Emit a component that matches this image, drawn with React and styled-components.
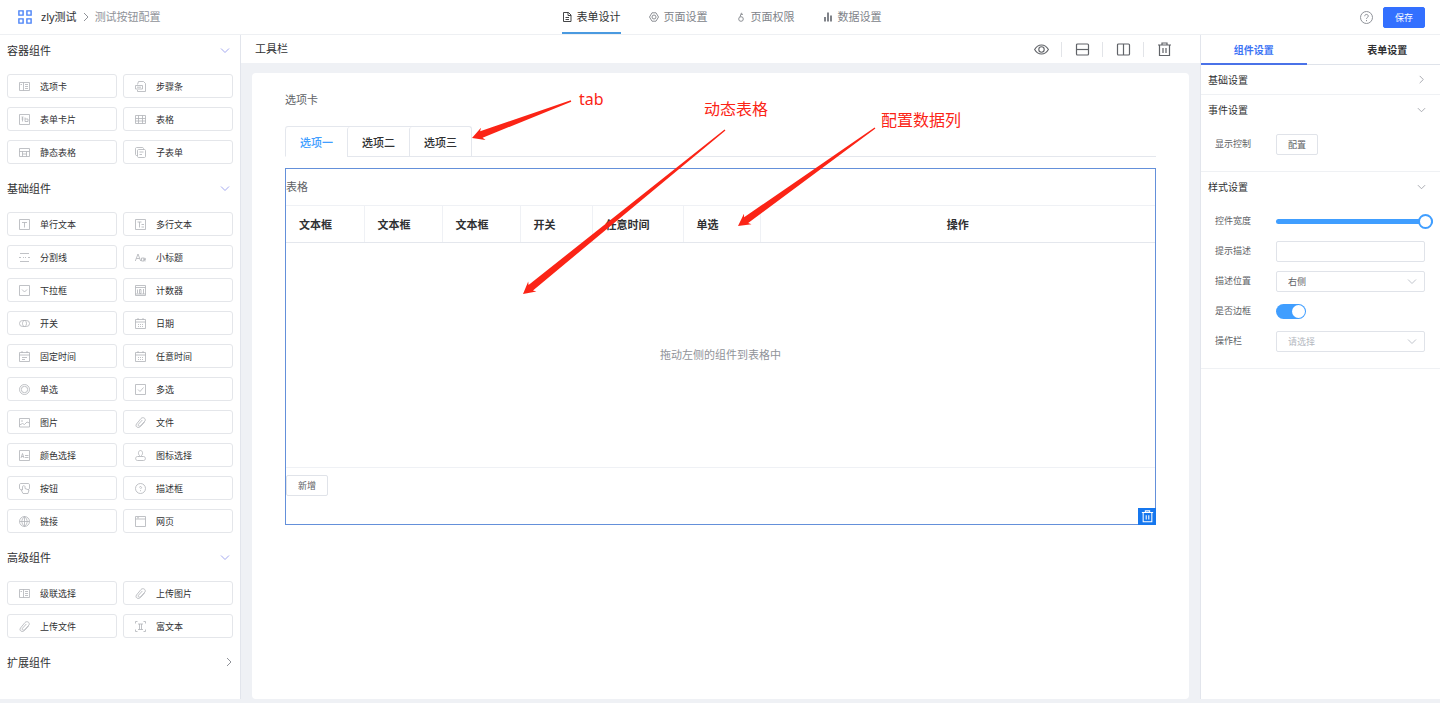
import React, { useState } from "react";
import styled, { createGlobalStyle, css } from "styled-components";

const GlobalStyle = createGlobalStyle`
  * { box-sizing: border-box; }
  body {
    margin: 0;
    background: #eff1f5;
    color: #303133;
    font-family: "Noto Sans", "Noto Sans CJK SC", sans-serif;
    font-size: 11px;
    line-height: 20px;
  }
  button, input, select { font-family: inherit; margin: 0; }
  button { cursor: pointer; }
  h1, h2, h3, p, ul { margin: 0; padding: 0; font-weight: 400; font-size: inherit; }
  svg { display: block; flex: none; }
`;

/* ---------- icons ---------- */

const Stroke = styled.svg`
  fill: none;
  stroke: currentColor;
  stroke-width: ${(p) => p.$weight || 1};
`;

const Chevron = ({ dir = "down", size = 10 }) => (
  <Stroke width={size} height={size} viewBox="0 0 10 10" aria-hidden="true">
    <path d={dir === "down" ? "M1 3.500l4 4 4-4" : "M3 1l4 4-4 4"} />
  </Stroke>
);

const glyphs = {
  tabs: <path d="M.5 1.500h10v8h-10zM4.500 1.500v8M6 3.500h3M6 5.500h3M6 7.500h3M1.500 3.500h1.500" />,
  steps: <path d="M2.500 3.500l1-3h5l2 2v8h-8v-1.500M.5 4.500h7v3.500h-7zM2 6.200h4" />,
  card: <path d="M.5 .5h10v10h-10zM2.500 3h2M2.500 5h2M3.500 3v4.500M6 3.500v4h3v-2.500h-3" />,
  table: <path d="M.5 1.500h10v8h-10zM.5 4.500h10M.5 7h10M3.500 1.500v8M7.500 1.500v8" />,
  staticTable: <path d="M.5 1.500h10v8h-10zM.5 4.500h10M3.500 4.500v5M7.500 4.500v5M3.500 7h4" />,
  subForm: <path d="M2.500 8.500h-1c-1 0-1-1-1-1v-6c0-1 1-1 1-1h6c1 0 1 1 1 1v1M3.500 2.500h6c1 0 1 1 1 1v6c0 1-1 1-1 1h-6c-1 0-1-1-1-1v-6c0-1 1-1 1-1zM4.500 5h4M4.500 7.500h2.500" />,
  text: <path d="M.5 .5h10v10h-10zM3 3.500h5M5.500 3.500v5" />,
  textarea: <path d="M.5 .5h10v10h-10zM2.500 3h4M4.500 3v5.500M6.500 5.500h2.500M6.500 8h2.500" />,
  divider: <path d="M1 1.500h9M0 5.500h2M4 5.500h1M6 5.500h1M9 5.500h2M1 9.500h9" />,
  heading: <path d="M.3 9l2.700-7 2.700 7M1.300 6.500h3.400M6.500 6h2.500v3h-2.500zM9 7.500h1.700c0-2-1.700-2-1.700 0s1 1.700 1.700 1.200" />,
  select: <path d="M.5 .5h10v10h-10zM3 4.500l2.500 2.500 2.500-2.500" />,
  counter: <path d="M.5 .5h10v10h-10zM.5 2.500h10M2.500 4.500v4M4.500 4.500h1.500v4h-1.500zM8.500 4v5M.5 9h10" />,
  toggle: (
    <>
      <rect x=".5" y="2.500" width="10" height="6" rx="3" />
      <path d="M5 2.500c-2 1-2 5 0 6M6 2.500c2 1 2 5 0 6" />
    </>
  ),
  date: <path d="M.5 1.500h10v9h-10zM.5 4h10M3 0v2M8 0v2M3 6.500h1M5 6.500h1M7 6.500h1M3 8.500h1M5 8.500h1M7 8.500h1" />,
  fixedTime: <path d="M.5 1.500h10v9h-10zM.5 4h10M3 0v2M8 0v2M3 6.500h5M3 8.500h3" />,
  radio: (
    <>
      <circle cx="5.500" cy="5.500" r="5" />
      <circle cx="5.500" cy="5.500" r="3.200" />
    </>
  ),
  checkbox: <path d="M.5 .5h10v10h-10zM3 5.500l2 2 3.500-4" />,
  image: <path d="M.5 1.500h10v8.500h-10zM2 4h2M.5 8l3-1.500 2 1 2.500-2.500 2.500 1" />,
  clip: <path d="M9.500 5l-4 4.500c-2.300 2.300-5.900 0-4-2.500l4.500-5.500c2-2 5.300 0 4 2.500l-4.300 4.700c-1.500 1.300-3.200-.2-2.200-1.500l3.800-4.200" />,
  color: <path d="M.5 .5h10v10h-10zM2 8l1.500-4.500 1.500 4.500M2.500 6.500h2M6 5.500h3.500M6 7.500h3.500" />,
  stamp: <path d="M3.500 6.500l1-1c-1.800-1.500-1.200-5 1-5s2.800 3.500 1 5l1 1M2.500 6.500h6c2.500 0 2.500 4 0 4h-6c-2.500 0-2.500-4 0-4z" />,
  button: <path d="M2 6.500c-1.500 0-1.500-1-1.500-1.500v-3c0-1 .5-1.500 1.500-1.500h7c1 0 1.500.5 1.500 1.500v3c0 1-.5 1.500-1.500 1.500M3.500 3.500v3.500l-1.500-.3 2 3.800h5l1-3.500-4-1.500v-2c0-1-2.500-1-2.500 0" />,
  info: (
    <>
      <circle cx="5.500" cy="5.500" r="5" />
      <path d="M4.500 4.500c0-1.500 2.500-1 2 .2l-1 1.300M5.500 7.200v1" />
    </>
  ),
  globe: (
    <>
      <circle cx="5.500" cy="5.500" r="5" />
      <path d="M.5 5.500h10M5.500 .5v10M5.500 .5c-3.500 3-3.500 7 0 10M5.500 .5c3.500 3 3.500 7 0 10" />
    </>
  ),
  page: <path d="M.5 .5h10v10h-10zM.5 3h10M2 1.800h2" />,
  rich: <path d="M.5 2.500v-2h2M8.500 .5h2v2M.5 8.500v2h2M8.500 10.500h2v-2M3 3h5M3 8.500h5M4.500 3v5.500M6.500 3v5.500" />,
};

const Glyph = ({ name }) => (
  <Stroke width="11" height="11" viewBox="0 0 11 11" $weight={0.8} aria-hidden="true">
    {glyphs[name]}
  </Stroke>
);

const Trash = ({ size = 15 }) => (
  <Stroke width={size} height={size} viewBox="0 0 15 15" $weight={1.2} aria-hidden="true">
    <path d="M1 3h13M5 3v-2h5v2M2.500 3v10.500h10v-10.500M6 6v5M9 6v5" />
  </Stroke>
);

/* ---------- page frame ---------- */

const Page = styled.div`
  min-height: 100vh;
  display: flex;
  flex-direction: column;
  padding-bottom: 4px;
`;

const TopBar = styled.header`
  display: grid;
  grid-template-columns: 1fr auto 1fr;
  height: 35px;
  padding: 0 15px 0 18px;
  background: #fff;
  border-bottom: 1px solid #eef0f3;
`;

const Crumbs = styled.nav`
  display: flex;
  align-items: center;
  gap: 4px;
  color: #909399;
`;

const Logo = styled.svg`
  fill: none;
  stroke: #4a82f7;
  stroke-width: 1.4;
`;

const CrumbLink = styled.a`
  margin-left: 5px;
  color: #303133;
  text-decoration: none;
`;

const MainNav = styled.nav`
  display: flex;
  gap: 28px;
`;

const NavLink = styled.a`
  display: flex;
  align-items: center;
  gap: 5px;
  height: 34px;
  padding-top: 2px;
  text-decoration: none;
  color: ${(p) => (p.$active ? "#303133" : "#808389")};
  border-bottom: 2px solid ${(p) => (p.$active ? "#4a9ae0" : "transparent")};
`;

const TopActions = styled.div`
  display: flex;
  align-items: center;
  justify-content: flex-end;
  gap: 10px;
`;

const IconButton = styled.button`
  display: flex;
  align-items: center;
  justify-content: center;
  padding: 0;
  border: 0;
  background: none;
  color: ${(p) => p.$tone || "#606368"};
`;

const Button = styled.button`
  width: 42px;
  height: 21px;
  padding: 0;
  border-radius: 2px;
  font-size: 9px;
  line-height: 19px;
  ${(p) =>
    p.$primary
      ? css`
          color: #fff;
          background: #3370ff;
          border: 1px solid #3370ff;
        `
      : css`
          color: #606266;
          background: #fff;
          border: 1px solid #e0e3e9;
        `}
`;

const Workspace = styled.div`
  flex: 1;
  display: flex;
`;

/* ---------- component palette ---------- */

const Palette = styled.aside`
  flex: none;
  width: 241px;
  background: #fff;
  border-right: 1px solid #e2e5ec;
`;

const GroupTitle = styled.button`
  display: flex;
  align-items: center;
  justify-content: space-between;
  width: 100%;
  height: 30px;
  padding: 0 ${(p) => (p.$open ? 10 : 6)}px 0 7px;
  border: 0;
  background: none;
  color: #303133;
  font-size: 11px;

  svg { color: ${(p) => (p.$open ? "#a3a8f0" : "#909399")}; }
`;

const ItemGrid = styled.div`
  display: grid;
  grid-template-columns: 1fr 1fr;
  gap: 9px 6px;
  padding: 9px 7px;
`;

const Item = styled.button`
  display: flex;
  align-items: center;
  gap: 10px;
  height: 24px;
  padding: 0 11px;
  border: 1px solid #e4e6ea;
  border-radius: 3px;
  background: #fff;
  color: #303133;
  font-size: 9px;

  svg { color: #b0b2b7; }
`;

/* ---------- designer ---------- */

const Designer = styled.main`
  flex: 1;
  min-width: 0;
  display: flex;
  flex-direction: column;
`;

const Toolbar = styled.div`
  display: flex;
  align-items: center;
  justify-content: space-between;
  height: 28px;
  padding: 0 28px 0 14px;
  background: #fff;
`;

const Tools = styled.div`
  display: flex;
  align-items: center;

  button + button {
    margin-left: 12px;
    padding-left: 13px;
    border-left: 1px solid #e2e4e8;
  }
`;

const Canvas = styled.section`
  position: relative;
  flex: 1;
  margin: 10px 11px 0;
  padding: 17px 33px;
  background: #fff;
  border-radius: 4px;
`;

const FieldLabel = styled.h2`
  color: #606266;
`;

const TabStrip = styled.div`
  display: flex;
  height: 31px;
  margin: 16px 0 11px;
  border-bottom: 1px solid #e4e7ed;
`;

const TabGroup = styled.div`
  display: flex;
  height: 31px;
  border: 1px solid #e4e7ed;
  border-width: 1px 1px 0 0;
  border-radius: 3px 3px 0 0;
`;

const Tab = styled.button`
  padding: 0 14px;
  border: 0;
  border-left: 1px solid #e4e7ed;
  border-bottom: 1px solid ${(p) => (p.$active ? "#fff" : "#e4e7ed")};
  border-radius: 3px 0 0 0;
  background: none;
  font-size: 11px;
  font-weight: 500;
  color: ${(p) => (p.$active ? "#409eff" : "#303133")};
`;

const SelectedBlock = styled.div`
  position: relative;
  padding-bottom: 28px;
  border: 1px solid #6490da;
`;

const BlockTitle = styled.h3`
  line-height: 36px;
  color: #606266;
`;

const Grid = styled.table`
  width: 100%;
  margin-bottom: 7px;
  border-collapse: collapse;
  table-layout: fixed;

  th, td { padding: 0; border: 1px solid #eff1f5; }
  th:first-child, td:first-child { border-left: 0; }
  th:last-child, td:last-child { border-right: 0; }
`;

const HeadCell = styled.th`
  width: ${(p) => (p.$width ? `${p.$width}px` : "auto")};
  height: 37px;
  && {
    padding-top: 2px;
    padding-left: ${(p) => (p.$width ? 13 : 0)}px;
    border-bottom-color: #e4e7ed;
  }
  text-align: ${(p) => (p.$width ? "left" : "center")};
  font-weight: 700;
  color: #303133;
`;

const EmptyCell = styled.td`
  height: 225px;
  text-align: center;
  color: #909399;
`;

const DeleteBadge = styled.button`
  position: absolute;
  right: -1px;
  bottom: -1px;
  display: flex;
  align-items: center;
  justify-content: center;
  width: 18px;
  height: 17px;
  padding: 0;
  border: 0;
  color: #fff;
  background: #1677ee;
`;

const Arrows = styled.svg`
  position: absolute;
  left: 0;
  top: 0;
  pointer-events: none;
  fill: #fb2416;
`;

const Note = styled.span`
  position: absolute;
  left: ${(p) => p.$x}px;
  top: ${(p) => p.$y}px;
  font-size: 16px;
  line-height: 20px;
  white-space: nowrap;
  color: #fb2416;
`;

/* ---------- settings ---------- */

const Settings = styled.aside`
  flex: none;
  width: 240px;
  background: #fff;
  border-left: 1px solid #e2e5ec;
`;

const SettingTabs = styled.div`
  display: flex;
  gap: 28px;
  height: 30px;
  box-shadow: inset 0 -1px #dfe3ea;
`;

const SettingTab = styled.button`
  flex: 1;
  padding: 0;
  border: 0;
  border-bottom: 2px solid ${(p) => (p.$active ? "#4a72e8" : "transparent")};
  background: none;
  font-size: 10px;
  font-weight: 700;
  color: ${(p) => (p.$active ? "#3d74f5" : "#303133")};
`;

const SettingGroup = styled.section`
  border-bottom: 1px solid #eff1f4;
`;

const SettingTitle = styled.button`
  display: flex;
  align-items: center;
  justify-content: space-between;
  width: 100%;
  height: 29px;
  padding: 0 14px 0 7px;
  border: 0;
  background: none;
  font-size: 10px;
  color: #303133;

  svg { color: #a0a3a9; }
`;

const Rows = styled.div`
  padding: 5px 15px 12px 14px;
`;

const Row = styled.div`
  display: grid;
  grid-template-columns: 61px 1fr;
  align-items: center;
  height: 30px;
  font-size: 9px;
  color: #606266;
`;

const fieldBox = css`
  width: 100%;
  height: 21px;
  padding: 0 11px;
  border: 1px solid #e0e3e9;
  border-radius: 2px;
  background: #fff;
  font-size: 9px;
  color: #606266;
`;

const TextInput = styled.input`
  ${fieldBox}
`;

const SelectWrap = styled.div`
  display: grid;
  align-items: center;

  select, svg { grid-area: 1 / 1; }
  svg { justify-self: end; margin-right: 8px; color: #c0c4cc; pointer-events: none; }
`;

const Select = styled.select`
  ${fieldBox}
  appearance: none;
  color: ${(p) => (p.$empty ? "#b4b8c0" : "#606266")};
`;

const Slider = styled.input`
  appearance: none;
  width: calc(100% + 8px);
  height: 15px;
  background: transparent;

  &::-webkit-slider-runnable-track {
    height: 5px;
    border-radius: 3px;
    background: #409eff;
  }
  &::-webkit-slider-thumb {
    appearance: none;
    width: 15px;
    height: 15px;
    margin-top: -5px;
    border: 2px solid #409eff;
    border-radius: 50%;
    background: #fff;
  }
`;

const Switch = styled.input`
  appearance: none;
  width: 30px;
  height: 15px;
  padding: 1px;
  border-radius: 8px;
  background: #c0c4cc;

  &::before {
    content: "";
    display: block;
    width: 13px;
    height: 13px;
    border-radius: 50%;
    background: #fff;
  }
  &:checked { background: #409eff; }
  &:checked::before { margin-left: auto; }
`;

/* ---------- data ---------- */

const groups = [
  {
    title: "容器组件",
    items: [
      ["tabs", "选项卡"], ["steps", "步骤条"], ["card", "表单卡片"],
      ["table", "表格"], ["staticTable", "静态表格"], ["subForm", "子表单"],
    ],
  },
  {
    title: "基础组件",
    items: [
      ["text", "单行文本"], ["textarea", "多行文本"], ["divider", "分割线"], ["heading", "小标题"],
      ["select", "下拉框"], ["counter", "计数器"], ["toggle", "开关"], ["date", "日期"],
      ["fixedTime", "固定时间"], ["date", "任意时间"], ["radio", "单选"], ["checkbox", "多选"],
      ["image", "图片"], ["clip", "文件"], ["color", "颜色选择"], ["stamp", "图标选择"],
      ["button", "按钮"], ["info", "描述框"], ["globe", "链接"], ["page", "网页"],
    ],
  },
  {
    title: "高级组件",
    items: [["tabs", "级联选择"], ["clip", "上传图片"], ["clip", "上传文件"], ["rich", "富文本"]],
  },
  { title: "扩展组件" },
];

const columns = [
  ["文本框", 78], ["文本框", 78], ["文本框", 78], ["开关", 72], ["任意时间", 91], ["单选", 77], ["操作"],
];

const navItems = [
  ["表单设计", <path d="M1.500 .5h5l2.500 2.500v6.500h-7.500zM6 .5v3h3M3.500 5.500h3.500M3.500 7.500h3.500" />],
  ["页面设置", <><path d="M3 .8h4l2.500 4.200-2.500 4.200h-4l-2.500-4.200z" /><circle cx="5" cy="5" r="2" /></>],
  ["页面权限", <><circle cx="5" cy="7" r="2.300" /><path d="M4 4.800l1.500-4M5 2.300h2" /></>],
  ["数据设置", <path strokeWidth="2" d="M2 9.500v-4.500M5 9.500v-9M8 9.500v-6" />],
];

/* Tapered arrow: thin at the tail, widening up to a barbed head. */
function arrowPoints([tx, ty], [hx, hy]) {
  const len = Math.hypot(hx - tx, hy - ty);
  const ux = (hx - tx) / len;
  const uy = (hy - ty) / len;
  const at = (back, side) => `${hx - ux * back - uy * side},${hy - uy * back + ux * side}`;
  return [
    at(len, 0.7), at(10, 3.5), at(12, 6.5), at(0, 0), at(12, -6.5), at(10, -3.5), at(len, -0.7),
  ].join(" ");
}

const arrows = [
  [[319, 28], [220, 65]],
  [[473, 57], [271, 221]],
  [[623, 55], [486, 153]],
];

const notes = [["tab", 327, 16], ["动态表格", 452, 26], ["配置数据列", 629, 37]];

/* ---------- views ---------- */

function PaletteGroup({ title, items }) {
  const [open, setOpen] = useState(Boolean(items));
  return (
    <section>
      <GroupTitle $open={open} aria-expanded={open} onClick={() => setOpen(!open)}>
        {title}
        <Chevron dir={open ? "down" : "right"} />
      </GroupTitle>
      {open && items && (
        <ItemGrid>
          {items.map(([icon, label]) => (
            <Item key={label}>
              <Glyph name={icon} />
              {label}
            </Item>
          ))}
        </ItemGrid>
      )}
    </section>
  );
}

function SettingSection({ title, children }) {
  const [open, setOpen] = useState(Boolean(children));
  return (
    <SettingGroup>
      <SettingTitle aria-expanded={open} onClick={() => setOpen(!open)}>
        {title}
        <Chevron dir={open ? "down" : "right"} size={9} />
      </SettingTitle>
      {open && children && <Rows>{children}</Rows>}
    </SettingGroup>
  );
}

export default function App() {
  const [tab, setTab] = useState("选项一");
  const [bordered, setBordered] = useState(true);
  const [width, setWidth] = useState(100);

  return (
    <Page>
      <GlobalStyle />
      <TopBar>
        <Crumbs>
          <Logo width="14" height="14" viewBox="0 0 14 14" aria-hidden="true">
            <path d="M.9 .9h4.200v4.200h-4.200zM8.900 .9h4.200v4.200h-4.200zM.9 8.900h4.200v4.200h-4.200zM8.900 8.900h4.200v4.200h-4.200z" />
          </Logo>
          <CrumbLink href="#">zly测试</CrumbLink>
          <Chevron dir="right" />
          <span>测试按钮配置</span>
        </Crumbs>
        <MainNav>
          {navItems.map(([label, icon], i) => (
            <NavLink key={label} href="#" $active={i === 0}>
              <Stroke width="10" height="10" viewBox="0 0 10 10" $weight={0.9} aria-hidden="true">{icon}</Stroke>
              {label}
            </NavLink>
          ))}
        </MainNav>
        <TopActions>
          <IconButton aria-label="帮助" $tone="#909399">
            <Stroke width="13" height="13" viewBox="0 0 13 13" aria-hidden="true">
              <circle cx="6.500" cy="6.500" r="6" />
              <path d="M4.700 5.200c0-2.500 3.700-2.200 3.600 0c0 1.200-1.800 1.200-1.800 2.600M6.500 9v1.200" />
            </Stroke>
          </IconButton>
          <Button $primary>保存</Button>
        </TopActions>
      </TopBar>

      <Workspace>
        <Palette>
          {groups.map((g) => (
            <PaletteGroup key={g.title} {...g} />
          ))}
        </Palette>

        <Designer>
          <Toolbar>
            <h1>工具栏</h1>
            <Tools>
              <IconButton aria-label="预览">
                <Stroke width="15" height="15" viewBox="0 0 15 15" $weight={1.1} aria-hidden="true">
                  <path d="M.6 7.500c3.400-6 10.400-6 13.800 0c-3.400 6-10.400 6-13.800 0z" />
                  <circle cx="7.500" cy="7.500" r="2.700" />
                </Stroke>
              </IconButton>
              <IconButton aria-label="上下布局">
                <Stroke width="15" height="15" viewBox="0 0 15 15" $weight={1.2} aria-hidden="true">
                  <rect x="1.500" y="2" width="12" height="11" rx="1" />
                  <path d="M1.500 7.500h12" />
                </Stroke>
              </IconButton>
              <IconButton aria-label="左右布局">
                <Stroke width="15" height="15" viewBox="0 0 15 15" $weight={1.2} aria-hidden="true">
                  <rect x="1.500" y="2" width="12" height="11" rx="1" />
                  <path d="M7.500 2v11" />
                </Stroke>
              </IconButton>
              <IconButton aria-label="清空">
                <Trash />
              </IconButton>
            </Tools>
          </Toolbar>

          <Canvas>
            <FieldLabel>选项卡</FieldLabel>
            <TabStrip>
              <TabGroup role="tablist">
                {["选项一", "选项二", "选项三"].map((t) => (
                  <Tab key={t} role="tab" aria-selected={t === tab} $active={t === tab} onClick={() => setTab(t)}>
                    {t}
                  </Tab>
                ))}
              </TabGroup>
            </TabStrip>

            <SelectedBlock>
              <BlockTitle>表格</BlockTitle>
              <Grid>
                <thead>
                  <tr>
                    {columns.map(([label, w], i) => (
                      <HeadCell key={i} scope="col" $width={w}>{label}</HeadCell>
                    ))}
                  </tr>
                </thead>
                <tbody>
                  <tr>
                    <EmptyCell colSpan={columns.length}>拖动左侧的组件到表格中</EmptyCell>
                  </tr>
                </tbody>
              </Grid>
              <Button>新增</Button>
              <DeleteBadge aria-label="删除">
                <Trash size={13} />
              </DeleteBadge>
            </SelectedBlock>

            <Arrows width="720" height="240" viewBox="0 0 720 240" aria-hidden="true">
              {arrows.map(([tail, head], i) => (
                <polygon key={i} points={arrowPoints(tail, head)} />
              ))}
            </Arrows>
            {notes.map(([text, x, y]) => (
              <Note key={text} $x={x} $y={y}>{text}</Note>
            ))}
          </Canvas>
        </Designer>

        <Settings>
          <SettingTabs role="tablist">
            <SettingTab role="tab" aria-selected="true" $active>组件设置</SettingTab>
            <SettingTab role="tab" aria-selected="false">表单设置</SettingTab>
          </SettingTabs>
          <SettingSection title="基础设置" />
          <SettingSection title="事件设置">
            <Row>
              <span>显示控制</span>
              <Button>配置</Button>
            </Row>
          </SettingSection>
          <SettingSection title="样式设置">
            <Row>
              <label htmlFor="width">控件宽度</label>
              <Slider id="width" type="range" value={width} onChange={(e) => setWidth(e.target.value)} />
            </Row>
            <Row>
              <label htmlFor="tip">提示描述</label>
              <TextInput id="tip" type="text" />
            </Row>
            <Row>
              <label htmlFor="place">描述位置</label>
              <SelectWrap>
                <Select id="place">
                  <option>右侧</option>
                </Select>
                <Chevron />
              </SelectWrap>
            </Row>
            <Row>
              <label htmlFor="border">是否边框</label>
              <Switch id="border" type="checkbox" checked={bordered} onChange={() => setBordered(!bordered)} />
            </Row>
            <Row>
              <label htmlFor="ops">操作栏</label>
              <SelectWrap>
                <Select id="ops" $empty>
                  <option>请选择</option>
                </Select>
                <Chevron />
              </SelectWrap>
            </Row>
          </SettingSection>
        </Settings>
      </Workspace>
    </Page>
  );
}
